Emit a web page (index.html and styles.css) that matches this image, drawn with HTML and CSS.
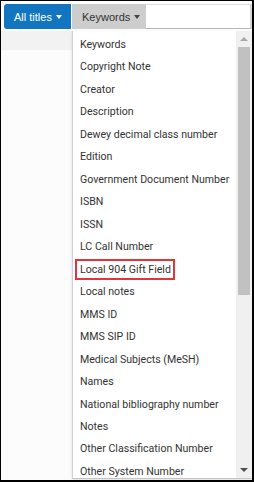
FILE: index.html
```html
<!DOCTYPE html>
<html>
<head>
    <title>Search</title>
    <link rel="stylesheet" href="styles.css">
</head>
<body>
    <div class="frame">
        <!-- Search bar -->
        <div class="topbar">
            <button class="btn btn-scope">All titles <svg class="caret" width="6" height="4" viewBox="0 0 6 4"><path d="M0 0H6L3 4Z" fill="#fff"/></svg></button>
            <button class="btn btn-field">Keywords <svg class="caret" width="6" height="4" viewBox="0 0 6 4"><path d="M0 0H6L3 4Z" fill="#444"/></svg></button>
            <div class="search-input"></div>
        </div>

        <!-- Page behind the menu -->
        <div class="band"></div>
        <div class="results">
            <div class="gap" style="height:47px"></div>
            <div class="edge" style="height:6px"></div>
            <div class="gap" style="height:72px"></div>
            <div class="edge" style="height:147px"></div>
            <div class="gap" style="height:121px"></div>
            <div class="edge" style="height:27px"></div>
        </div>

        <!-- Field menu -->
        <div class="menu">
            <ul class="menu-list">
                <li>Keywords</li>
                <li>Copyright Note</li>
                <li>Creator</li>
                <li>Description</li>
                <li>Dewey decimal class number</li>
                <li>Edition</li>
                <li>Government Document Number</li>
                <li>ISBN</li>
                <li>ISSN</li>
                <li>LC Call Number</li>
                <li><span class="mark">Local 904 Gift Field</span></li>
                <li>Local notes</li>
                <li>MMS ID</li>
                <li>MMS SIP ID</li>
                <li>Medical Subjects (MeSH)</li>
                <li>Names</li>
                <li>National bibliography number</li>
                <li>Notes</li>
                <li>Other Classification Number</li>
                <li>Other System Number</li>
            </ul>
            <div class="scrollbar">
                <div class="arrow"><svg width="8" height="4" viewBox="0 0 8 4"><path d="M0 4H8L4 0Z" fill="#a8a8a8"/></svg></div>
                <div class="thumb"></div>
                <div class="track"></div>
                <div class="arrow"><svg width="8" height="4" viewBox="0 0 8 4"><path d="M0 0H8L4 4Z" fill="#505050"/></svg></div>
            </div>
        </div>
    </div>
</body>
</html>
```

FILE: styles.css
```css
body {
    margin: 0;
    font-family: Roboto, "Liberation Sans", Arial, sans-serif;
    background-color: #fff;
}
.frame {
    position: relative;
    width: 251px;
    height: 479px;
    border: 1px solid #000;
    border-right-width: 2px;
    border-bottom-width: 2px;
    overflow: hidden;
    background-color: #fcfcfc;
}
.topbar {
    display: flex;
    height: 25px;
    padding: 3px 0 2px 3px;
    background-color: #fff;
}
.btn {
    display: flex;
    align-items: center;
    gap: 4px;
    height: 25px;
    margin: 0;
    border: none;
    font-family: "Liberation Sans", Arial, sans-serif;
    font-size: 11px;
    padding: 0 0 0 10px;
    white-space: nowrap;
    flex-shrink: 0;
}
.btn-scope {
    width: 67px;
    background-color: #1176bf;
    color: #fff;
    border-radius: 3px 0 0 3px;
    margin-right: 1px;
}
.btn-field {
    width: 74px;
    background-color: #cdcdcd;
    color: #333;
}
.caret {
    margin-top: 1px;
}
.search-input {
    flex: 1;
    border-top: 1px solid #ddd;
    border-bottom: 1px solid #b5b5b5;
    border-right: 2px solid #d5d5d5;
    box-sizing: border-box;
}
.band {
    height: 19px;
    background-color: #f2f2f2;
}
.results {
    margin-left: 71px;
}
.edge {
    border-left: 1px solid #1a86c0;
}
.menu {
    position: absolute;
    top: 30px;
    left: 71px;
    right: 0;
    bottom: 1px;
    display: flex;
    background-color: #fff;
    border-left: 1px solid rgba(0, 0, 0, 0.18);
    border-bottom: 1px solid #c4c4c4;
    box-shadow: 0 1px 3px rgba(0, 0, 0, 0.12);
    overflow: hidden;
}
.menu-list {
    flex: 1;
    min-width: 0;
    overflow: hidden;
    list-style: none;
    margin: 0;
    padding: 3px 0 0 7px;
    font-size: 10.6px;
    color: #333;
}
.menu-list li {
    height: 22.47px;
    line-height: 22.47px;
    white-space: nowrap;
}
.mark {
    display: inline-block;
    line-height: 17px;
    border: 2px solid #e2353b;
    padding: 0 2px 0 3px;
    margin-left: -5px;
    vertical-align: middle;
}
.scrollbar {
    display: flex;
    flex-direction: column;
    flex-shrink: 0;
    width: 16px;
    background-color: #f0f0f0;
}
.arrow {
    display: flex;
    justify-content: center;
    align-items: center;
    height: 16px;
}
.thumb {
    height: 248px;
    margin: 0 2px;
    background-color: #c1c1c1;
}
.track {
    flex: 1;
}
```
